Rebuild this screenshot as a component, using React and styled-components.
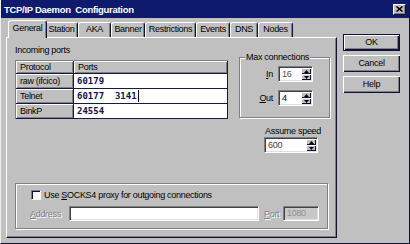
import React from "react";
import styled, { createGlobalStyle } from "styled-components";

const GlobalStyle = createGlobalStyle`
  html, body { margin: 0; padding: 0; background: #c0c0c0; }
  body {
    font-family: "Liberation Sans", Arial, sans-serif;
    font-size: 9px;
    letter-spacing: -0.3px;
    color: #000;
  }
  * { box-sizing: border-box; }
`;

const Window = styled.div`
  width: 410px;
  height: 244px;
  background: #c0c0c0;
  border-left: 1px solid #eeeeee;
  border-right: 1px solid #10103a;
  border-bottom: 1px solid #10103a;
  display: flex;
  flex-direction: column;
  overflow: hidden;
`;

const TitleBar = styled.div`
  height: 18px;
  margin-left: -1px;
  background: #0e1a6b;
  color: #fff;
  font-weight: bold;
  font-size: 9.5px;
  display: flex;
  align-items: center;
  justify-content: space-between;
  padding: 0 3px 0 4px;
`;

const CloseBtn = styled.div`
  width: 13px;
  height: 11px;
  background: #c0c0c0;
  border-top: 1px solid #fff;
  border-left: 1px solid #fff;
  border-right: 1px solid #10103a;
  border-bottom: 1px solid #10103a;
  box-shadow: inset -1px -1px #808080;
  display: flex;
  align-items: center;
  justify-content: center;
`;

const Body = styled.div`
  display: flex;
  padding: 2px 0 0 5px;
`;

const Main = styled.div`
  width: 331px;
  display: flex;
  flex-direction: column;
`;

const TabRow = styled.div`
  display: flex;
  align-items: flex-end;
  height: 17px;
  padding-left: 4px;
`;

const Tab = styled.div`
  position: relative;
  z-index: ${(p) => (p.$active ? 2 : 1)};
  width: ${(p) => (p.$active ? p.$w + 4 : p.$w)}px;
  height: ${(p) => (p.$active ? 18 : 15)}px;
  margin: ${(p) => (p.$active ? "0 -2px -1px" : "0")};
  background: #c0c0c0;
  border-top: 1px solid #fff;
  border-left: 1px solid #fff;
  border-right: 1px solid #10103a;
  box-shadow: inset -1px 0 #808080;
  border-radius: 3px 3px 0 0;
  text-align: center;
  line-height: ${(p) => (p.$active ? 14 : 13)}px;
`;

const Panel = styled.div`
  height: 201px;
  background: #c0c0c0;
  border-top: 1px solid #fff;
  border-left: 1px solid #fff;
  border-right: 1px solid #10103a;
  border-bottom: 1px solid #10103a;
  box-shadow: inset -1px -1px #808080;
  padding: 6px 5px 8px 8px;
  display: flex;
  flex-direction: column;
`;

const Top = styled.div`
  display: flex;
  gap: 11px;
`;

const LeftCol = styled.div`
  width: 213px;
`;

const Caption = styled.div`
  line-height: 13px;
  margin-bottom: 3px;
`;

const PortTable = styled.div`
  display: grid;
  grid-template-columns: 57px 1fr;
  grid-template-rows: 12px repeat(3, 14px);
  gap: 1px;
  padding: 1px;
  background: #181848;
  box-shadow: inset 1px 1px #808080;
`;

const HeadCell = styled.div`
  background: #c0c0c0;
  box-shadow: inset 1px 1px #fff, inset -1px -1px #808080;
  padding-left: 4px;
  display: flex;
  align-items: center;
`;

const PortCell = styled.div`
  background: #fff;
  font-family: "DejaVu Sans Mono", "Liberation Mono", monospace;
  font-weight: bold;
  font-size: 9px;
  letter-spacing: 0;
  color: #10104a;
  padding-left: 3px;
  display: flex;
  align-items: center;
  white-space: pre;
`;

const Caret = styled.span`
  display: inline-block;
  width: 1px;
  height: 12px;
  background: #000;
  margin-left: 1px;
`;

const RightCol = styled.div`
  width: 91px;
  display: flex;
  flex-direction: column;
`;

const Group = styled.div`
  position: relative;
  height: ${(p) => p.$h}px;
  border: 1px solid #808080;
  box-shadow: inset 1px 1px #fff, 1px 1px #fff;
`;

const MaxGroup = styled(Group)`
  margin-top: 13px;
  padding: 8px 16px 0 0;
  display: flex;
  flex-direction: column;
  align-items: flex-end;
  gap: 8px;
`;

const Legend = styled.span`
  position: absolute;
  top: -7px;
  left: 5px;
  padding: 0 1px;
  background: #c0c0c0;
  line-height: 12px;
`;

const SpinRow = styled.div`
  display: flex;
  align-items: center;
  gap: 5px;
`;

const Spin = styled.div`
  width: ${(p) => p.$w}px;
  height: 16px;
  background: #fff;
  border-top: 1px solid #808080;
  border-left: 1px solid #808080;
  border-right: 1px solid #fff;
  border-bottom: 1px solid #fff;
  box-shadow: inset 1px 1px #404040, inset -1px -1px #dfdfdf;
  display: flex;
  padding: 1px;
`;

const SpinValue = styled.div`
  flex: 1;
  padding-left: 2px;
  line-height: 13px;
  color: ${(p) => p.$c || "#000"};
`;

const SpinButtons = styled.div`
  width: 10px;
  display: flex;
  flex-direction: column;
`;

const SpinBtn = styled.div`
  flex: 1;
  background: #c0c0c0;
  box-shadow: inset 1px 1px #fff, inset -1px -1px #10103a;
  display: flex;
  align-items: center;
  justify-content: center;
`;

const SpeedBox = styled.div`
  align-self: flex-end;
  margin: 8px 9px 0 0;
  display: flex;
  flex-direction: column;
  gap: 1px;
`;

const SpeedLabel = styled.div`
  line-height: 10px;
  padding-left: 1px;
`;

const ProxyGroup = styled(Group)`
  margin: auto 3px 0 0;
  padding: 6px 0 0 15px;
`;

const CheckRow = styled.div`
  display: flex;
  align-items: center;
  gap: 3px;
  height: 10px;
`;

const CheckBox = styled.div`
  width: 10px;
  height: 10px;
  background: #fff;
  border-top: 1px solid #808080;
  border-left: 1px solid #808080;
  border-right: 1px solid #fff;
  border-bottom: 1px solid #fff;
  box-shadow: inset 1px 1px #10103a;
`;

const AddrRow = styled.div`
  display: flex;
  align-items: center;
  height: 15px;
  margin-top: 6px;
`;

const Disabled = styled.div`
  width: ${(p) => p.$w}px;
  margin-left: ${(p) => p.$ml || 0}px;
  color: #808080;
  text-shadow: 1px 1px 0 #fff;
`;

const TextBox = styled.div`
  width: ${(p) => p.$w}px;
  height: 15px;
  background: ${(p) => (p.$disabled ? "#c8c8c8" : "#fff")};
  border-top: 1px solid #808080;
  border-left: 1px solid #808080;
  border-right: 1px solid #fff;
  border-bottom: 1px solid #fff;
  box-shadow: inset 1px 1px #404040, inset -1px -1px #dfdfdf;
  color: #909090;
  padding-left: 3px;
  line-height: 13px;
`;

const ButtonCol = styled.div`
  width: 57px;
  margin: 14px 0 0 6px;
  display: flex;
  flex-direction: column;
  gap: 4px;
`;

const Button = styled.div`
  height: 17px;
  background: #c0c0c0;
  border: 1px solid ${(p) => (p.$default ? "#10103a" : "transparent")};
  box-shadow: ${(p) =>
    p.$default
      ? "inset 1px 1px #fff, inset -1px -1px #10103a, inset -2px -2px #808080"
      : "inset 1px 1px #fff, inset -1px -1px #10103a, inset -2px -2px #808080"};
  text-align: center;
  line-height: 14px;
  ${(p) => !p.$default && "border: none; height: 17px; line-height: 16px;"}
`;

const Arrow = ({ up }) => (
  <svg width="5" height="3" viewBox="0 0 5 3">
    <path d={up ? "M2.5 0 L5 3 L0 3 Z" : "M0 0 L5 0 L2.5 3 Z"} fill="#000" />
  </svg>
);

const SpinBox = ({ w, value, color }) => (
  <Spin $w={w}>
    <SpinValue $c={color}>{value}</SpinValue>
    <SpinButtons>
      <SpinBtn>
        <Arrow up />
      </SpinBtn>
      <SpinBtn>
        <Arrow />
      </SpinBtn>
    </SpinButtons>
  </Spin>
);

const tabs = [
  ["General", 35],
  ["Station", 33],
  ["AKA", 33],
  ["Banner", 34],
  ["Restrictions", 51],
  ["Events", 34],
  ["DNS", 28],
  ["Nodes", 35],
];

const ports = [
  ["raw (ifcico)", "60179"],
  ["Telnet", "60177  3141"],
  ["BinkP", "24554"],
];

export default function App() {
  return (
    <Window>
      <GlobalStyle />
      <TitleBar>
        <span>TCP/IP Daemon&nbsp; Configuration</span>
        <CloseBtn>
          <svg width="7" height="6" viewBox="0 0 7 6">
            <path d="M0.5 0.5 L6.5 5.5 M6.5 0.5 L0.5 5.5" stroke="#000" strokeWidth="1.6" />
          </svg>
        </CloseBtn>
      </TitleBar>
      <Body>
        <Main>
          <TabRow>
            {tabs.map(([name, w], i) => (
              <Tab key={name} $w={w} $active={i === 0}>
                {name}
              </Tab>
            ))}
          </TabRow>
          <Panel>
            <Top>
              <LeftCol>
                <Caption>Incoming ports</Caption>
                <PortTable>
                  <HeadCell>Protocol</HeadCell>
                  <HeadCell>Ports</HeadCell>
                  {ports.map(([proto, val]) => (
                    <React.Fragment key={proto}>
                      <HeadCell>{proto}</HeadCell>
                      <PortCell>
                        {val}
                        {proto === "Telnet" && <Caret />}
                      </PortCell>
                    </React.Fragment>
                  ))}
                </PortTable>
              </LeftCol>
              <RightCol>
                <MaxGroup $h={61}>
                  <Legend>Max connections</Legend>
                  <SpinRow>
                    <span>
                      <u>I</u>n
                    </span>
                    <SpinBox w={35} value="16" color="#505050" />
                  </SpinRow>
                  <SpinRow>
                    <span>
                      <u>O</u>ut
                    </span>
                    <SpinBox w={35} value="4" />
                  </SpinRow>
                </MaxGroup>
                <SpeedBox>
                  <SpeedLabel>Assume speed</SpeedLabel>
                  <SpinBox w={54} value="600" color="#404040" />
                </SpeedBox>
              </RightCol>
            </Top>
            <ProxyGroup $h={46}>
              <CheckRow>
                <CheckBox />
                <span>
                  Use <u>S</u>OCKS4 proxy for outgoing connections
                </span>
              </CheckRow>
              <AddrRow>
                <Disabled $w={39} $ml={-1}>
                  <u>A</u>ddress
                </Disabled>
                <TextBox $w={190} />
                <Disabled $w={19} $ml={5}>
                  <u>P</u>ort
                </Disabled>
                <TextBox $w={36} $disabled>
                  1080
                </TextBox>
              </AddrRow>
            </ProxyGroup>
          </Panel>
        </Main>
        <ButtonCol>
          <Button $default>OK</Button>
          <Button>Cancel</Button>
          <Button>Help</Button>
        </ButtonCol>
      </Body>
    </Window>
  );
}
